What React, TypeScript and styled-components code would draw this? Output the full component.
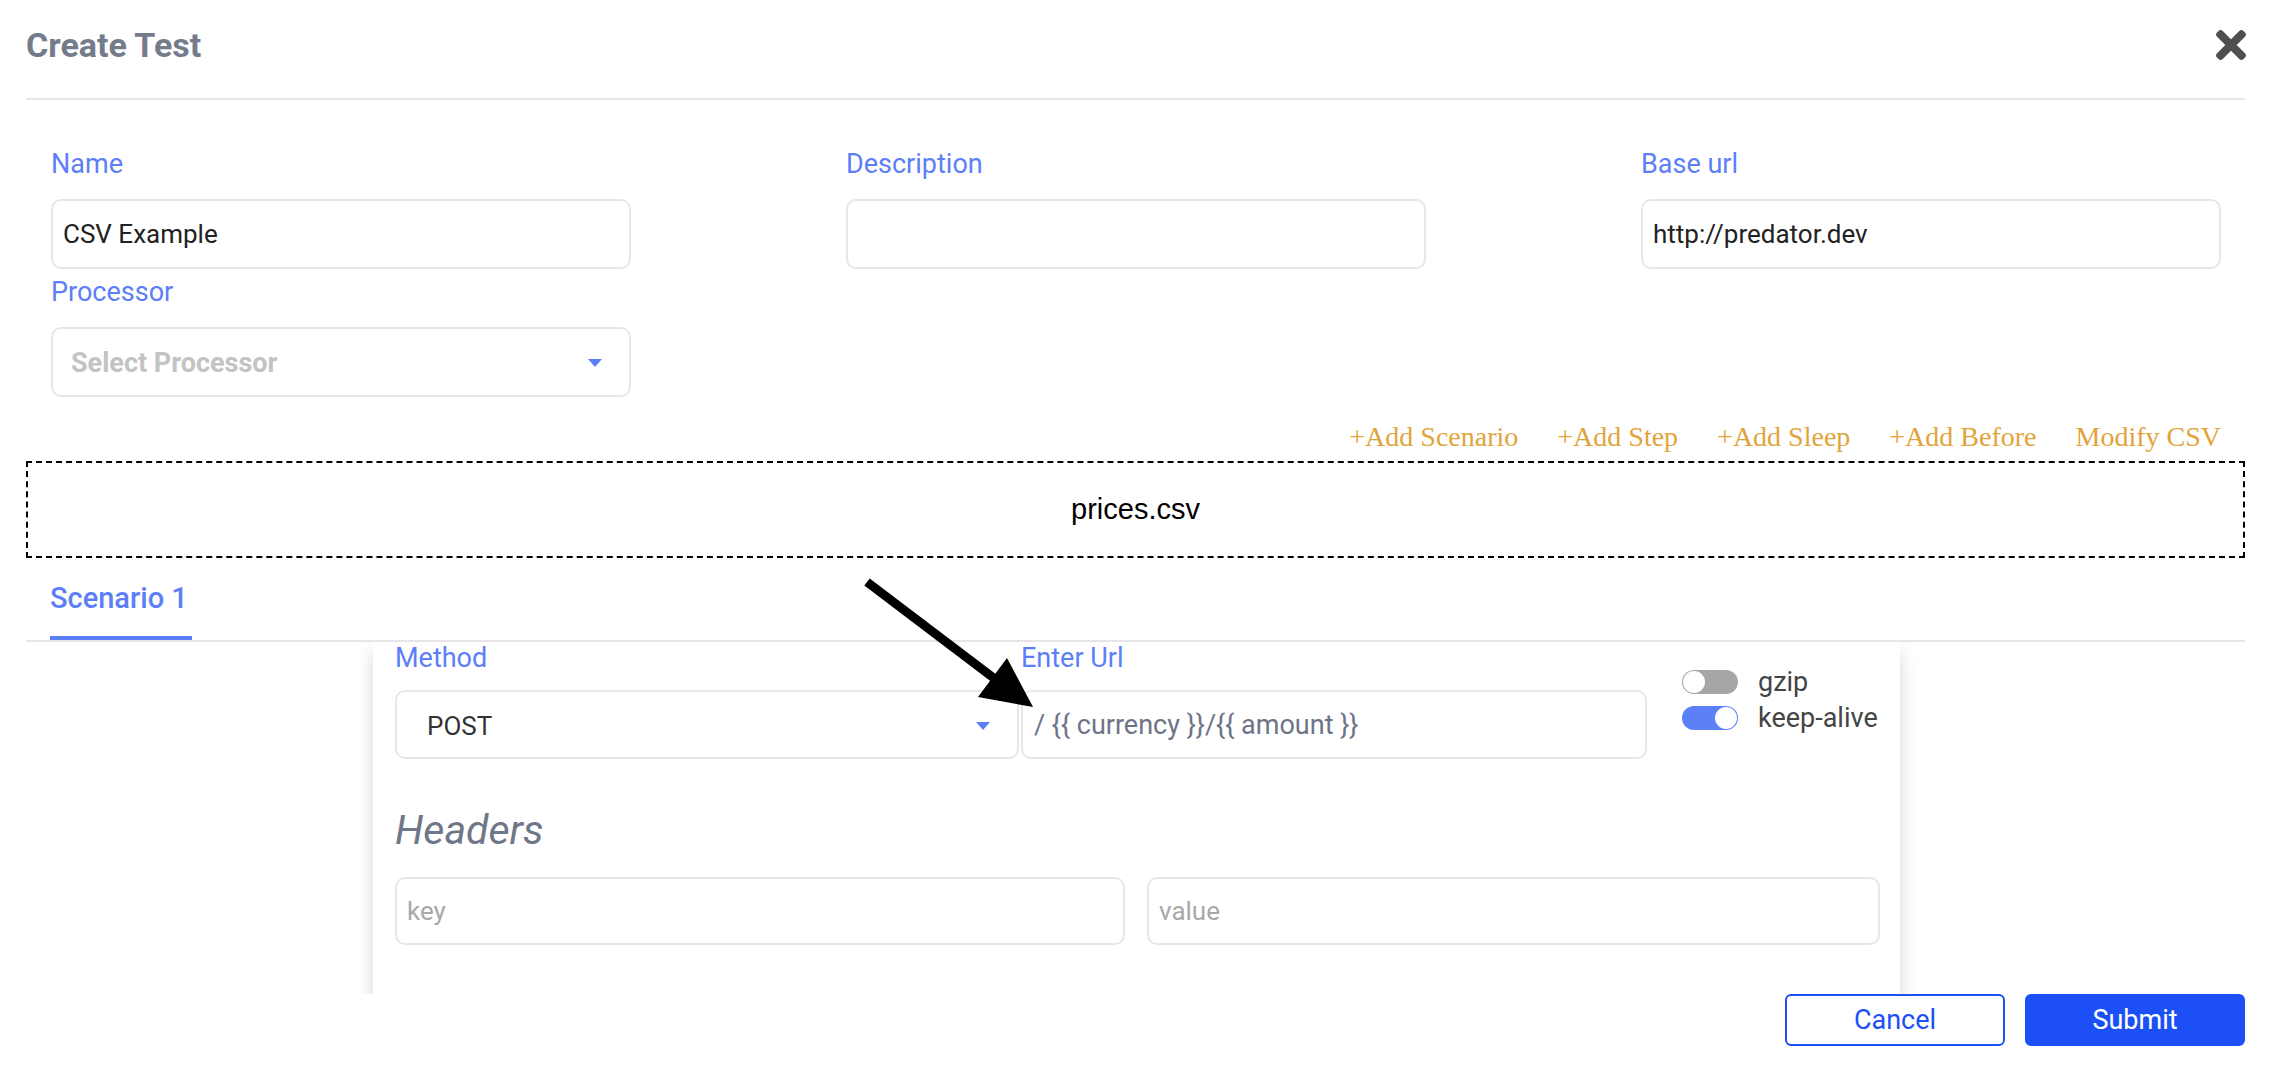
import React from 'react';
import styled, { createGlobalStyle } from 'styled-components';

const GlobalStyle = createGlobalStyle`
  html, body { margin: 0; padding: 0; background: #ffffff; }
  body { font-family: Roboto, "Liberation Sans", sans-serif; color: #333; }
  * { box-sizing: border-box; }
`;

const BLUE = '#5c7ef7';

const Page = styled.div`
  position: relative;
  width: 2276px;
  padding: 0 31px 0 26px;
`;

const Header = styled.header`
  height: 100px;
  padding-bottom: 8px;
  border-bottom: 2px solid #e6e6e6;
  display: flex;
  align-items: center;
  justify-content: space-between;
`;

const Title = styled.h1`
  margin: 0;
  font-size: 34px;
  font-weight: 700;
  color: #747b8a;
`;

const CloseButton = styled.button`
  border: 0;
  background: none;
  padding: 0;
  width: 30px;
  height: 30px;
  display: flex;
  cursor: pointer;
  margin-right: -1px;
`;

const FormSection = styled.section`
  padding: 49px 24px 0 25px;
`;

const FieldGrid = styled.div`
  display: grid;
  grid-template-columns: repeat(3, 580px);
  justify-content: space-between;
  row-gap: 8px;
`;

const Field = styled.div`
  display: flex;
  flex-direction: column;
`;

const Label = styled.label`
  font-size: 27px;
  line-height: 30px;
  height: 30px;
  color: ${BLUE};
  margin-bottom: 20px;
`;

const TextInput = styled.input<{ $pad?: number; $muted?: boolean; $size?: number }>`
  height: 70px;
  width: 100%;
  border: 2px solid #e7e7e7;
  border-radius: 10px;
  padding: 0 12px 0 ${(p) => p.$pad ?? 10}px;
  font-family: Roboto, "Liberation Sans", sans-serif;
  font-size: ${(p) => p.$size ?? 26}px;
  color: ${(p) => (p.$muted ? '#6e7487' : '#222')};
  background: #fff;
  outline: none;
  &::placeholder { color: #a8a8a8; }
`;

const SelectBox = styled.div<{ $pad: number; $h?: number }>`
  height: ${(p) => p.$h ?? 70}px;
  border: 2px solid #e7e7e7;
  border-radius: 10px;
  display: flex;
  align-items: center;
  justify-content: space-between;
  padding: 2px 27px 0 ${(p) => p.$pad}px;
  background: #fff;
`;

const SelectText = styled.span<{ $placeholder?: boolean }>`
  font-size: ${(p) => (p.$placeholder ? 27 : 26)}px;
  font-weight: ${(p) => (p.$placeholder ? 700 : 400)};
  color: ${(p) => (p.$placeholder ? '#c3c3c3' : '#333')};
`;

const ActionBar = styled.nav`
  margin-top: 24px;
  display: flex;
  justify-content: flex-end;
  gap: 39px;
`;

const ActionLink = styled.a`
  font-family: "Liberation Serif", "Times New Roman", serif;
  font-size: 28px;
  line-height: 32px;
  color: #e1a43b;
  cursor: pointer;
  text-decoration: none;
`;

const CsvBox = styled.div`
  margin-top: 8px;
  height: 97px;
  border: 2px dashed #000;
  display: flex;
  align-items: center;
  justify-content: center;
  font-family: "Liberation Sans", Arial, sans-serif;
  font-size: 29px;
  color: #000;
`;

const Tabs = styled.div`
  height: 84px;
  border-bottom: 2px solid #e6e6e6;
  display: flex;
  padding-left: 24px;
`;

const Tab = styled.div<{ $active?: boolean }>`
  height: 82px;
  padding: 25px 4px 0 0;
  font-size: 29px;
  line-height: 30px;
  font-weight: 500;
  color: ${BLUE};
  border-bottom: 4px solid ${(p) => (p.$active ? BLUE : 'transparent')};
`;

const ScrollArea = styled.div`
  height: 352px;
  overflow: hidden;
`;

const Card = styled.div`
  margin-left: 347px;
  width: 1527px;
  min-height: 420px;
  background: #fff;
  padding: 0 20px 40px 22px;
  box-shadow: -10px 0 16px -10px rgba(0, 0, 0, 0.16), 10px 0 16px -10px rgba(0, 0, 0, 0.16);
`;

const RequestRow = styled.div`
  display: flex;
  align-items: flex-start;
`;

const MethodField = styled(Field)`
  width: 624px;
`;

const UrlField = styled(Field)`
  width: 626px;
  margin-left: 2px;
`;

const CardLabel = styled(Label)`
  line-height: 32px;
  height: 32px;
  margin-bottom: 16px;
`;

const ToggleGroup = styled.div`
  margin: 28px 0 0 35px;
  display: flex;
  flex-direction: column;
  gap: 12px;
`;

const ToggleRow = styled.div`
  display: flex;
  align-items: center;
  gap: 20px;
  height: 24px;
`;

const Track = styled.span<{ $on?: boolean }>`
  width: 56px;
  height: 24px;
  border-radius: 12px;
  padding: 1px;
  display: flex;
  justify-content: ${(p) => (p.$on ? 'flex-end' : 'flex-start')};
  background: ${(p) => (p.$on ? '#5b80f7' : '#a4a7a4')};
`;

const Knob = styled.span`
  width: 22px;
  height: 22px;
  border-radius: 50%;
  background: #fff;
`;

const ToggleText = styled.span`
  font-size: 27px;
  color: #444;
`;

const SectionTitle = styled.h2`
  margin: 47px 0 23px;
  font-size: 41px;
  line-height: 48px;
  font-style: italic;
  font-weight: 400;
  color: #6f7688;
`;

const HeadersRow = styled.div`
  display: grid;
  grid-template-columns: 730px 733px;
  column-gap: 22px;
`;

const Footer = styled.footer`
  display: flex;
  justify-content: flex-end;
  gap: 20px;
`;

const Button = styled.button<{ $primary?: boolean }>`
  width: 220px;
  height: 52px;
  border-radius: 6px;
  border: 2px solid #1c4ff5;
  background: ${(p) => (p.$primary ? '#1c4ff5' : '#fff')};
  color: ${(p) => (p.$primary ? '#fff' : '#1c4ff5')};
  font-family: Roboto, "Liberation Sans", sans-serif;
  font-size: 27px;
  cursor: pointer;
`;

const ArrowOverlay = styled.svg`
  position: absolute;
  left: 850px;
  top: 570px;
  pointer-events: none;
`;

const Caret = () => (
  <svg width="14" height="8" viewBox="0 0 14 8">
    <polygon points="0,0 14,0 7,8" fill={BLUE} />
  </svg>
);

const CloseIcon = () => (
  <svg width="30" height="30" viewBox="0 80 352 352">
    <path
      fill="#4f4f4f"
      d="M242.72 256l100.07-100.07c12.28-12.28 12.28-32.19 0-44.48l-22.24-22.24c-12.28-12.28-32.19-12.28-44.48 0L176 189.28 75.93 89.21c-12.28-12.28-32.19-12.28-44.48 0L9.21 111.45c-12.28 12.28-12.28 32.19 0 44.48L109.28 256 9.21 356.07c-12.28 12.28-12.28 32.19 0 44.48l22.24 22.24c12.28 12.28 32.2 12.28 44.48 0L176 322.72l100.07 100.07c12.28 12.28 32.2 12.28 44.48 0l22.24-22.24c12.28-12.28 12.28-32.19 0-44.48L242.72 256z"
    />
  </svg>
);

const Toggle = ({ on, label }: { on?: boolean; label: string }) => (
  <ToggleRow>
    <Track $on={on}>
      <Knob />
    </Track>
    <ToggleText>{label}</ToggleText>
  </ToggleRow>
);

const actions = ['+Add Scenario', '+Add Step', '+Add Sleep', '+Add Before', 'Modify CSV'];

export default function App() {
  return (
    <Page>
      <GlobalStyle />
      <Header>
        <Title>Create Test</Title>
        <CloseButton aria-label="close">
          <CloseIcon />
        </CloseButton>
      </Header>

      <FormSection>
        <FieldGrid>
          <Field>
            <Label>Name</Label>
            <TextInput defaultValue="CSV Example" $pad={10} />
          </Field>
          <Field>
            <Label>Description</Label>
            <TextInput defaultValue="" />
          </Field>
          <Field>
            <Label>Base url</Label>
            <TextInput defaultValue="http://predator.dev" $pad={10} />
          </Field>
          <Field>
            <Label>Processor</Label>
            <SelectBox $pad={18}>
              <SelectText $placeholder>Select Processor</SelectText>
              <Caret />
            </SelectBox>
          </Field>
        </FieldGrid>
        <ActionBar>
          {actions.map((a) => (
            <ActionLink key={a}>{a}</ActionLink>
          ))}
        </ActionBar>
      </FormSection>

      <CsvBox>prices.csv</CsvBox>

      <Tabs>
        <Tab $active>Scenario 1</Tab>
      </Tabs>

      <ScrollArea>
        <Card>
          <RequestRow>
            <MethodField>
              <CardLabel>Method</CardLabel>
              <SelectBox $pad={30} $h={69}>
                <SelectText>POST</SelectText>
                <Caret />
              </SelectBox>
            </MethodField>
            <UrlField>
              <CardLabel>Enter Url</CardLabel>
              <TextInput $pad={11} $muted $size={27} style={{ height: 69 }} defaultValue="/ {{ currency }}/{{ amount }}" />
            </UrlField>
            <ToggleGroup>
              <Toggle label="gzip" />
              <Toggle on label="keep-alive" />
            </ToggleGroup>
          </RequestRow>
          <SectionTitle>Headers</SectionTitle>
          <HeadersRow>
            <TextInput placeholder="key" $pad={10} style={{ height: 68 }} />
            <TextInput placeholder="value" $pad={10} style={{ height: 68 }} />
          </HeadersRow>
        </Card>
      </ScrollArea>

      <Footer>
        <Button>Cancel</Button>
        <Button $primary>Submit</Button>
      </Footer>

      <ArrowOverlay width="190" height="145" viewBox="0 0 190 145">
        <line x1="17" y1="12" x2="145" y2="109" stroke="#000" strokeWidth="9" />
        <polygon points="183,137 128,127 157,88" fill="#000" />
      </ArrowOverlay>
    </Page>
  );
}
